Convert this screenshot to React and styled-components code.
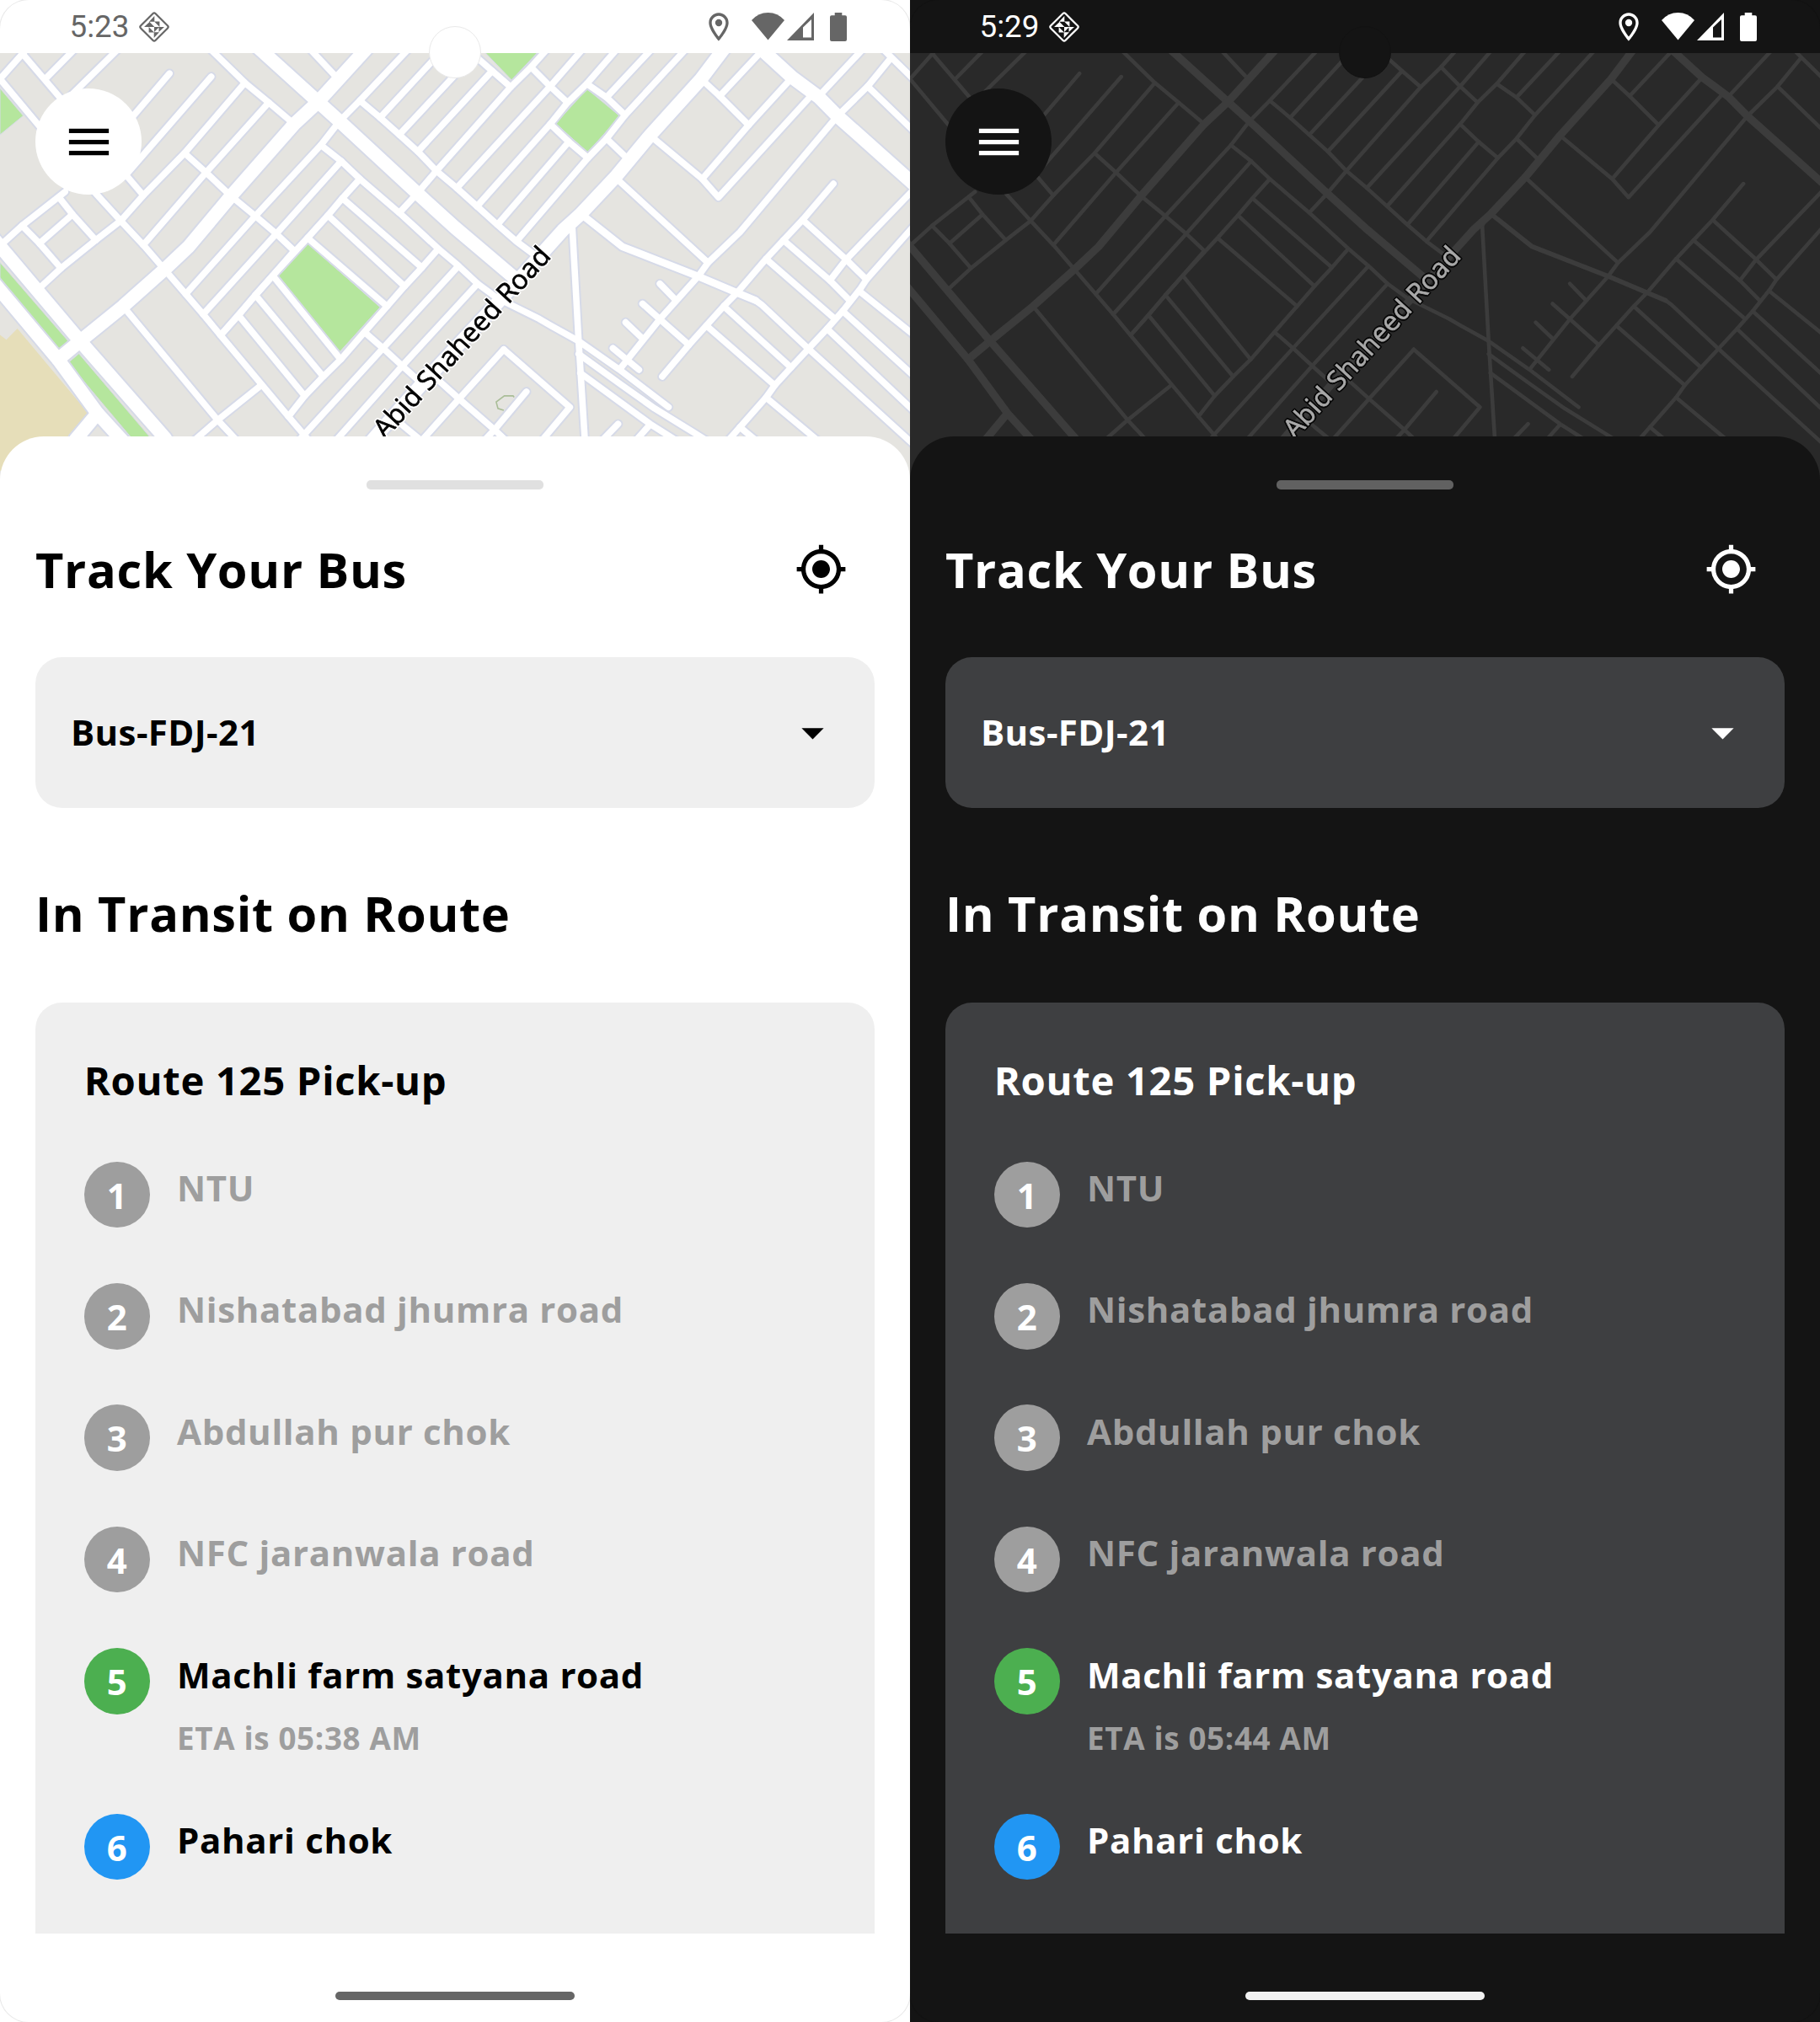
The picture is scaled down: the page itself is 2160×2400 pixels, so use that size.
import React from 'react';
import styled, { createGlobalStyle, ThemeProvider } from 'styled-components';
import { MdMenu, MdMyLocation, MdArrowDropDown, MdOutlineLocationOn } from 'react-icons/md';

const light = {
  bg: '#ffffff', text: '#000000', card: '#efefef', muted: '#9e9e9e',
  handle: '#e0e0e0', home: '#666666', status: '#666666', edge: '#e9e9e9',
  land: '#e5e4e0', road: '#ffffff', casing: '#d6dae8', minor: 7.6, major: 15.8, mid: 8.6,
  park: '#b5e69d', sand: '#e6deb9', label: '#000000', halo: '#ffffff',
};
const dark = {
  bg: '#141414', text: '#ffffff', card: '#3e3f41', muted: '#9e9e9e',
  handle: '#616161', home: '#f2f2f2', status: '#ffffff', edge: '#121212',
  land: '#292929', road: '#3c3c3c', casing: null, minor: 4.6, major: 9.2, mid: 5.6,
  park: null, sand: null, label: '#a9a9a9', halo: '#080808',
};

const Global = createGlobalStyle`
  body { margin: 0; background: #fff; }
  * { box-sizing: border-box; }
`;

const Page = styled.div`
  display: flex;
  width: 2160px;
  height: 2400px;
  font-family: 'Open Sans', 'Noto Sans', sans-serif;
`;

const Screen = styled.section`
  position: relative;
  display: flex;
  flex-direction: column;
  width: 1080px;
  height: 2400px;
  overflow: hidden;
  background: ${(p) => p.theme.bg};
  color: ${(p) => p.theme.text};
`;

const Bezel = styled.div`
  position: absolute;
  inset: 0;
  border-radius: 34px;
  box-shadow: 0 0 0 1px ${(p) => p.theme.edge};
  pointer-events: none;
`;

const StatusBar = styled.header`
  display: flex;
  align-items: center;
  height: 63px;
  padding: 0 75.5px 0 82.5px;
  color: ${(p) => p.theme.status};
`;

const Clock = styled.span`
  width: 81.5px;
  font: 400 36.75px/62px Roboto, sans-serif;
`;

const StatusIcons = styled.div`
  display: flex;
  align-items: center;
  margin-left: auto;
  svg { display: block; }
`;

const Gap = styled.span`
  width: ${(p) => p.$w}px;
`;

const Camera = styled.div`
  position: absolute;
  top: 31px;
  left: 509px;
  width: 62px;
  height: 62px;
  border-radius: 50%;
  border: 1px solid ${(p) => p.theme.edge};
  background: ${(p) => p.theme.bg};
`;

const MapArea = styled.div`
  height: 537px;
  margin-bottom: -82px;
  overflow: hidden;
  background: ${(p) => p.theme.land};
  svg { display: block; }
`;

const MapLabel = styled.text`
  font-family: 'Open Sans', 'Noto Sans', sans-serif;
  font-size: 32px;
  letter-spacing: 0.2px;
  fill: ${(p) => p.theme.label};
  stroke: ${(p) => p.theme.label};
  stroke-width: 0.7px;
  filter:
    drop-shadow(1px 1px 0.4px ${(p) => p.theme.halo})
    drop-shadow(-1px -1px 0.4px ${(p) => p.theme.halo})
    drop-shadow(1px -1px 0.4px ${(p) => p.theme.halo})
    drop-shadow(-1px 1px 0.4px ${(p) => p.theme.halo});
`;

const MenuButton = styled.button`
  position: absolute;
  top: 105px;
  left: 42px;
  display: flex;
  align-items: center;
  width: 126px;
  height: 126px;
  padding: 0 0 0 31.5px;
  border: 0;
  border-radius: 50%;
  background: ${(p) => p.theme.bg};
  color: ${(p) => p.theme.text};
`;

const Sheet = styled.main`
  position: relative;
  display: flex;
  flex-direction: column;
  flex: 1;
  padding: 52px 42px 0;
  border-radius: 52px 52px 0 0;
  background: ${(p) => p.theme.bg};
`;

const Handle = styled.div`
  align-self: center;
  width: 210px;
  height: 11px;
  border-radius: 5px;
  background: ${(p) => p.theme.handle};
`;

const TitleRow = styled.div`
  display: flex;
  align-items: center;
  justify-content: space-between;
  height: 63px;
  margin-top: 63px;
  padding-right: 31.6px;
`;

const Heading = styled.h1`
  margin: 0;
  font-size: 57.75px;
  font-weight: 700;
  line-height: 78px;
  letter-spacing: 0.68px;
`;

const Select = styled.div`
  display: flex;
  align-items: center;
  justify-content: space-between;
  height: 179px;
  margin-top: 73px;
  padding: 0 42px;
  border-radius: 31.5px;
  background: ${(p) => p.theme.card};
  font-size: 42px;
  font-weight: 700;
  letter-spacing: 0.4px;
`;

const BusName = styled.span`
  margin-bottom: 2px;
  line-height: 58px;
`;

const SectionHeading = styled(Heading)`
  margin: 85.5px 0 67.5px;
`;

const RouteCard = styled.div`
  height: 1105px;
  padding: 60px 57.75px 0;
  border-radius: 31.5px 31.5px 0 0;
  background: ${(p) => p.theme.card};
`;

const RouteTitle = styled.h2`
  margin: 0 0 64.5px;
  font-size: 47.25px;
  font-weight: 700;
  line-height: 64px;
  letter-spacing: 0.66px;
`;

const Stop = styled.div`
  display: flex;
  gap: 32px;
  height: ${(p) => (p.$tall ? 196.6 : 144.4)}px;
`;

const tone = { past: '#9e9e9e', current: '#4caf50', next: '#2196f3' };

const Badge = styled.div`
  width: 78.25px;
  height: 78.75px;
  border-radius: 50%;
  background: ${(p) => tone[p.$state]};
  color: #fff;
  font-size: 42px;
  font-weight: 700;
  line-height: 80.5px;
  text-align: center;
`;

const StopText = styled.div`
  padding-top: 2.5px;
  font-weight: 700;
  white-space: nowrap;
`;

const StopName = styled.div`
  font-size: 42px;
  line-height: 57px;
  letter-spacing: 0.66px;
  color: ${(p) => (p.$state === 'past' ? p.theme.muted : p.theme.text)};
`;

const Eta = styled.div`
  margin-top: 22px;
  font-size: 36.75px;
  line-height: 50px;
  letter-spacing: 0.66px;
  color: ${(p) => p.theme.muted};
`;

const HomeBar = styled.div`
  align-self: center;
  width: 284px;
  height: 10px;
  margin-top: 69px;
  border-radius: 5px;
  background: ${(p) => p.theme.home};
`;

const majorRoads = [
  '445,148 548,316 585,376 718,598 784,706 881,854 893,870',
  '1250,145 1208,245 1120,420 1060,550 1000,665 970,714 861,932 726,1193 651,1346 625,1400',
  '633,148 548,316 507,385 398,608 325,765 282,838 212,950 138,1058 100,1115',
  '-10,742 0,764 138,1058 285,1360',
  '-10,878 0,900 100,1115 168,1282 215,1375',
  '168,1282 130,1364',
  '1309,148 1365,240 1410,300 1443,360 1580,580',
];

const midRoads = [
  '1000,662 1072,765 1203,857 1270,908 1302,932',
];

const minorRoads = [
  '34,150 38,165 247,606', '48,148 0,245 -10,265', '131,148 78,245', '206,148 110,318',
  '-10,222 0,245 65,385 165,600 208,685 247,760 320,912 350,975 380,1040 497,1292 535,1372',
  '292,228 182,460', '364,238 218,540',
  '422,257 318,475 247,606 208,685 165,745 105,832 66,897',
  '360,148 422,257 463,318 507,385', '463,318 355,535 247,760',
  '318,475 355,535 398,608 440,670 476,725 507,778',
  '103,615 125,665 165,745', '112,595 38,700 0,762', '38,700 68,755 105,832', '125,665 68,755',
  '450,1195 375,1303 335,1366', '212,950 375,1303 410,1370',
  '585,376 553,450 440,670 320,912', '588,500 476,725 350,975',
  '553,450 588,500 620,555 688,660 716,706 755,771 789,823 823,880 857,925 929,989 949,1010 997,1058 1067,1146 1152,1263',
  '752,530 720,598 688,660',
  '997,1098 1070,1193 1128,1267 1191,1337 1225,1375', '1000,1157 1120,1315 1170,1372',
  '993,676 986,700 997,1058 1009,1400',
  '1065,1315 1030,1380', '1120,1317 1090,1378',
  '620,555 590,615 565,668 530,738 470,855 440,915 411,978 380,1040',
  '590,615 727,830', '565,668 697,888', '530,738 667,950',
  '470,855 587,1115', '440,915 557,1168', '411,978 525,1228',
  '755,772 727,830 697,888 667,950 628,1030 587,1115 557,1168 525,1228 497,1292',
  '507,778 380,1040',
  '790,825 660,1080 515,1366', '823,880 693,1135 578,1368',
  '628,1030 660,1080 693,1135 722,1182', '736,1148 791,1237 852,1333 875,1372',
  '868,1084 791,1237 722,1376', '868,1084 982,1263 925,1385', '907,1215 852,1333 830,1375',
  '680,1297 697,1324 728,1370',
  '532,148 580,240',
  '706,148 620,312 585,376', '766,148 655,365', '819,165 780,240 688,418', '848,220 720,470',
  '620,312 655,365 688,418 720,470 752,530 787,583 822,640 857,697 890,749 928,800',
  '812,163 848,220 880,270', '945,148 915,208 880,270 752,530',
  '915,208 948,268 978,318', '1006,148 948,268 787,583',
  '1065,148 1011,260 978,318 948,385 822,640', '1125,148 1045,302',
  '1184,148 1077,357 1045,430 1013,490 890,748',
  '1011,260 1045,302 1077,357', '948,385 980,440 1013,490', '1045,430 1080,490', '980,440 857,697',
  '1208,245 1240,298 1290,388', '1318,148 1240,298',
  '1365,240 1290,388 1210,555', '1120,420 1210,555 1238,612 1400,292',
  '1535,180 1495,268 1443,360 1275,720 1220,815 1203,857 1137,990 1068,1145',
  '1489,148 1410,300', '1522,153 1537,180 1580,256', '1495,268 1580,416', '1060,550 1220,815',
  '1302,932 1312,945 1393,1082 1580,1388',
  '1436,570 1383,682 1350,745 1320,803 1270,908 1247,950 1217,1010 1187,1070 1141,1168',
  '1383,682 1458,805 1493,867', '1350,745 1430,870 1464,932', '1320,803 1438,988',
  '1580,577 1458,805 1430,870',
  '1580,690 1493,867 1482,897 1452,965 1425,1020 1393,1082 1363,1140 1335,1195 1320,1233 1275,1325 1250,1376',
  '1482,905 1580,1047', '1452,965 1580,1175', '1425,1020 1580,1284',
  '1247,950 1363,1140', '1217,1010 1335,1195', '1320,1233 1412,1371', '1275,1325 1305,1370',
  '1137,880 1165,932', '1107,942 1137,990 1187,1070', '1078,1000 1107,1050', '1056,1080 1101,1147',
];

const parks = [
  '829,150 933,150 881.5,248', '1011.5,276 1068,360 1013,473 957.5,383',
  '530.5,755 655,953 585.5,1091 480,856', '0,274 40,359 0,418',
  '0,814 117.5,1058 100,1086 0,867', '136,1097 117.5,1125 232,1370 265,1370',
];

const Roads = ({ lines, width, color }) => (
  <g stroke={color} strokeWidth={width} fill="none" strokeLinecap="round" strokeLinejoin="round">
    {lines.map((d) => <polyline key={d} points={d} vectorEffect="non-scaling-stroke" />)}
  </g>
);

function StreetMap({ t, id }) {
  return (
    <svg width="1080" height="537" viewBox="0 63 1080 537">
      {/* Street geometry lives on a 1568 x 1568 survey grid */}
      <g transform="scale(0.68878 0.38265)">
        {t.sand && <polygon fill={t.sand} points="0,1039 11,1054 30,1019 152,1282 117,1354 60,1460 0,1460" />}
        {t.park && parks.map((p) => (
          <polygon key={p} fill={t.park} stroke={t.casing} strokeWidth="1" vectorEffect="non-scaling-stroke" points={p} />
        ))}
        {t.park && (
          <polyline points="886,1232 884,1228 869,1228 855,1247 858,1267 868,1273" fill="none" stroke="#a9bd97" strokeWidth="1.6" vectorEffect="non-scaling-stroke" />
        )}
        {t.casing && (
          <>
            <Roads lines={minorRoads} width={t.minor + 4} color={t.casing} />
            <Roads lines={midRoads} width={t.mid + 4} color={t.casing} />
            <Roads lines={majorRoads} width={t.major + 4} color={t.casing} />
          </>
        )}
        <Roads lines={minorRoads} width={t.minor} color={t.road} />
        <Roads lines={midRoads} width={t.mid} color={t.road} />
        <Roads lines={majorRoads} width={t.major} color={t.road} />
      </g>
      <path id={id} d="M457 522 L561 408 L690 267" fill="none" />
      <MapLabel>
        <textPath href={`#${id}`}>Abid Shaheed Road</textPath>
      </MapLabel>
    </svg>
  );
}

const QuiltIcon = () => (
  <svg width="38" height="38" viewBox="-19 -19 38 38">
    <rect x="-12.300" y="-12.300" width="24.600" height="24.600" rx="2" transform="rotate(45)" fill="none" stroke="currentColor" strokeWidth="2.200" />
    <path
      fill="currentColor"
      d="M.3-13V-6.200H-6Z M-12 0L-5.500-6V0Z M-.3 13V6.200H6Z M12 0L5.500 6V0Z M-6-6.400L.4 0H-6Z M0-6.400H6.400V0Z M-6.400 0L0 6.400H-6.400Z M0 0H6L0 6Z"
    />
  </svg>
);

const WifiIcon = () => (
  <svg width="39" height="33" viewBox="0 0 39 33">
    <path d="M19.500 32.500L0 9Q8 0 19.500 0T39 9Z" fill="currentColor" />
  </svg>
);

const SignalIcon = () => (
  <svg width="32" height="33" viewBox="0 0 32 33">
    <path fillRule="evenodd" d="M0 33L32 0V33Z M19 17.500V29.500H29V8Z" fill="currentColor" />
  </svg>
);

const BatteryIcon = () => (
  <svg width="20" height="34" viewBox="0 0 20 34">
    <path d="M5.700 0h8.600v3.300H18a2 2 0 0 1 2 2V32a2 2 0 0 1-2 2H2a2 2 0 0 1-2-2V5.300a2 2 0 0 1 2-2h3.700z" fill="currentColor" />
  </svg>
);

const stops = [
  ['NTU', 'past'],
  ['Nishatabad jhumra road', 'past'],
  ['Abdullah pur chok', 'past'],
  ['NFC jaranwala road', 'past'],
  ['Machli farm satyana road', 'current'],
  ['Pahari chok', 'next'],
];

function Phone({ theme, time, eta, id }) {
  return (
    <ThemeProvider theme={theme}>
      <Screen>
        <StatusBar>
          <Clock>{time}</Clock>
          <QuiltIcon />
          <StatusIcons>
            <MdOutlineLocationOn size={40} />
            <Gap $w={19} />
            <WifiIcon />
            <Gap $w={3} />
            <SignalIcon />
            <Gap $w={19} />
            <BatteryIcon />
          </StatusIcons>
        </StatusBar>
        <MapArea><StreetMap t={theme} id={id} /></MapArea>
        <Camera />
        <MenuButton aria-label="Menu"><MdMenu size={63} /></MenuButton>
        <Sheet>
          <Handle />
          <TitleRow>
            <Heading>Track Your Bus</Heading>
            <MdMyLocation size={63} />
          </TitleRow>
          <Select>
            <BusName>Bus-FDJ-21</BusName>
            <MdArrowDropDown size={63} />
          </Select>
          <SectionHeading as="h2">In Transit on Route</SectionHeading>
          <RouteCard>
            <RouteTitle>Route 125 Pick-up</RouteTitle>
            {stops.map(([name, state], i) => (
              <Stop key={name} $tall={state === 'current'}>
                <Badge $state={state}>{i + 1}</Badge>
                <StopText>
                  <StopName $state={state}>{name}</StopName>
                  {state === 'current' && <Eta>ETA is {eta}</Eta>}
                </StopText>
              </Stop>
            ))}
          </RouteCard>
          <HomeBar />
        </Sheet>
        <Bezel />
      </Screen>
    </ThemeProvider>
  );
}

export default function App() {
  return (
    <>
      <Global />
      <Page>
        <Phone theme={light} time="5:23" eta="05:38 AM" id="label-light" />
        <Phone theme={dark} time="5:29" eta="05:44 AM" id="label-dark" />
      </Page>
    </>
  );
}
